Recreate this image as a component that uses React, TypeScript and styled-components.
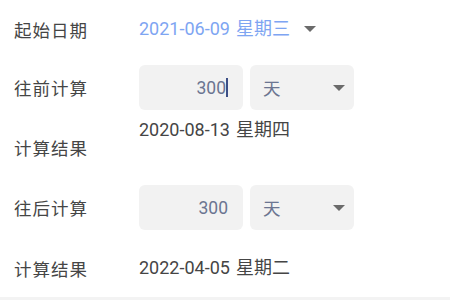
import React from 'react';
import styled, { createGlobalStyle } from 'styled-components';

const GlobalStyle = createGlobalStyle`
  html, body {
    margin: 0;
    padding: 0;
    background: #ffffff;
  }
  body {
    font-family: Roboto, "Noto Sans CJK SC", sans-serif;
    -webkit-font-smoothing: antialiased;
  }
`;

const Page = styled.div`
  width: 450px;
  height: 300px;
  overflow: hidden;
  display: flex;
  flex-direction: column;
`;

const Row = styled.div<{ $h: number; $mt?: number }>`
  display: flex;
  flex-shrink: 0;
  align-items: center;
  height: ${p => p.$h}px;
  margin-top: ${p => p.$mt || 0}px;
  padding-left: 14px;
`;

const Label = styled.div`
  width: 125px;
  flex-shrink: 0;
  font-size: 17.5px;
  color: #454545;
  letter-spacing: 1px;
  align-self: center;
`;

const DateText = styled.div<{ $blue?: boolean; $top?: boolean }>`
  display: flex;
  align-items: center;
  gap: 6px;
  font-size: 18px;
  line-height: 24px;
  color: ${p => (p.$blue ? '#7ea5f2' : '#454545')};
  align-self: ${p => (p.$top ? 'flex-start' : 'center')};
  margin-top: ${p => (p.$top ? '8px' : '0')};
`;

const Caret = styled.span<{ $size: number }>`
  width: 0;
  height: 0;
  border-left: ${p => p.$size}px solid transparent;
  border-right: ${p => p.$size}px solid transparent;
  border-top: ${p => p.$size}px solid #6b6b6b;
`;

const Controls = styled.div`
  display: flex;
  gap: 7px;
  height: 45px;
`;

const NumberBox = styled.div`
  width: 104px;
  box-sizing: border-box;
  background: #f2f2f2;
  border-radius: 6px;
  display: flex;
  align-items: center;
  justify-content: flex-end;
  padding-right: 15px;
  font-size: 17.5px;
  color: #6b7591;
`;

const Cursor = styled.span`
  display: inline-block;
  width: 2px;
  height: 19px;
  background: #3d4f86;
`;

const UnitSelect = styled.div`
  width: 104px;
  box-sizing: border-box;
  background: #f2f2f2;
  border-radius: 6px;
  display: flex;
  align-items: center;
  justify-content: space-between;
  padding: 0 9px 0 13px;
  font-size: 17.5px;
  color: #6b7591;
`;

const Divider = styled.div`
  flex-shrink: 0;
  margin-top: 6px;
  height: 10px;
  background: #f3f3f3;
`;

const Calc = ({ label, value, focused, mt }: { label: string; value: string; focused?: boolean; mt: number }) => (
  <Row $h={45} $mt={mt}>
    <Label>{label}</Label>
    <Controls>
      <NumberBox>
        {value}
        {focused && <Cursor />}
      </NumberBox>
      <UnitSelect>
        <span>天</span>
        <Caret $size={6} />
      </UnitSelect>
    </Controls>
  </Row>
);

export default function App() {
  return (
    <Page>
      <GlobalStyle />
      <Row $h={58}>
        <Label>起始日期</Label>
        <DateText $blue>
          <span>2021-06-09</span>
          <span>星期三</span>
          <Caret $size={6} style={{ marginLeft: 8 }} />
        </DateText>
      </Row>
      <Calc label="往前计算" value="300" focused mt={7} />
      <Row $h={75}>
        <Label>计算结果</Label>
        <DateText $top>
          <span>2020-08-13</span>
          <span>星期四</span>
        </DateText>
      </Row>
      <Calc label="往后计算" value="300" mt={0} />
      <Row $h={46} $mt={15}>
        <Label>计算结果</Label>
        <DateText>
          <span>2022-04-05</span>
          <span>星期二</span>
        </DateText>
      </Row>
      <Divider />
    </Page>
  );
}
